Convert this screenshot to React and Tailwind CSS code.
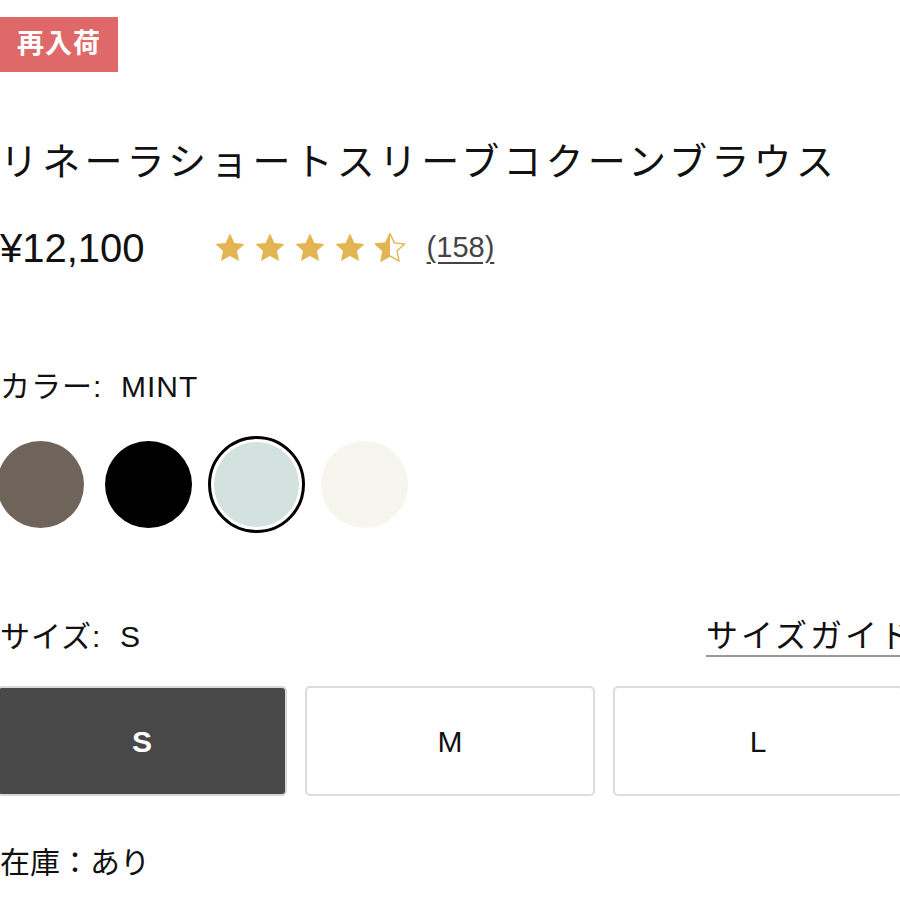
import React from "react";

const FONT = "font-['Liberation_Sans','Noto_Sans_CJK_JP',sans-serif]";

const STAR = "M12 1.8l3.1 6.6 7.2.8-5.4 4.9 1.5 7.1L12 17.6l-6.4 3.6 1.5-7.1L1.7 9.2l7.2-.8z";

const Star = ({ half }) => (
  <svg viewBox="0 0 24 24" className="w-[34px] h-[34px]">
    <defs>
      <clipPath id="leftHalf">
        <rect x="0" y="0" width="12" height="24" />
      </clipPath>
    </defs>
    {half ? (
      <>
        <path d={STAR} fill="none" stroke="#e2b552" strokeWidth="1" strokeLinejoin="round" />
        <path d={STAR} fill="#e2b552" clipPath="url(#leftHalf)" />
      </>
    ) : (
      <path d={STAR} fill="#e2b552" />
    )}
  </svg>
);

const swatches = [
  { color: "bg-[#6e645a]" },
  { color: "bg-black" },
  { color: "bg-[#d4e2df]", selected: true },
  { color: "bg-[#f6f5ee]" },
];

const sizes = ["S", "M", "L"];

export default function App() {
  return (
    <div className={`w-[900px] h-[900px] overflow-hidden bg-white text-[#111] ${FONT}`}>
      <div className="pt-[17px]">
        <span className="inline-flex items-center justify-center w-[118px] h-[55px] bg-[#df6868] text-white text-[27px] font-bold tracking-[1px]">
          再入荷
        </span>
      </div>

      <h1 className="mt-[66px] text-[38px] leading-[48px] tracking-[4.2px] font-normal whitespace-nowrap">
        リネーラショートスリーブコクーンブラウス
      </h1>

      <div className="mt-[42px] flex items-center h-[40px]">
        <span className="text-[40px] leading-none">¥12,100</span>
        <div className="ml-[68px] flex items-center gap-[6px]">
          <Star />
          <Star />
          <Star />
          <Star />
          <Star half />
        </div>
        <span className="ml-[20px] text-[29px] text-[#444] underline decoration-[2px] underline-offset-[5px]">
          (158)
        </span>
      </div>

      <div className="mt-[99px] text-[30px] leading-[40px] tracking-[1px] whitespace-pre">
        カラー:  MINT
      </div>

      <div className="mt-[29px] flex items-center gap-[21px] -ml-[3px]">
        {swatches.map((s, i) =>
          s.selected ? (
            <div
              key={i}
              className="w-[97px] h-[97px] rounded-full border-[3px] border-black p-[3px] -mx-[5px] bg-white"
            >
              <div className={`w-full h-full rounded-full ${s.color}`} />
            </div>
          ) : (
            <div key={i} className={`w-[87px] h-[87px] rounded-full ${s.color}`} />
          )
        )}
      </div>

      <div className="mt-[83px] flex items-center justify-between w-[915px] h-[40px]">
        <span className="text-[30px] tracking-[1px] whitespace-pre">サイズ:  S</span>
        <span className="text-[32px] tracking-[3px] whitespace-nowrap underline decoration-[#999] decoration-[2px] underline-offset-[8px]">
          サイズガイド
        </span>
      </div>

      <div className="mt-[30px] grid grid-cols-3 gap-[18px] w-[906px] -ml-[3px]">
        {sizes.map((s) => (
          <div
            key={s}
            className={
              s === "S"
                ? "h-[110px] rounded-[5px] bg-[#484848] border-2 border-[#d8d8d8] flex items-center justify-center text-white text-[30px] font-bold"
                : "h-[110px] rounded-[5px] bg-white border-2 border-[#dcdcdc] flex items-center justify-center text-[30px]"
            }
          >
            {s}
          </div>
        ))}
      </div>

      <div className="mt-[47px] text-[30px] leading-[40px]">在庫：あり</div>
    </div>
  );
}
